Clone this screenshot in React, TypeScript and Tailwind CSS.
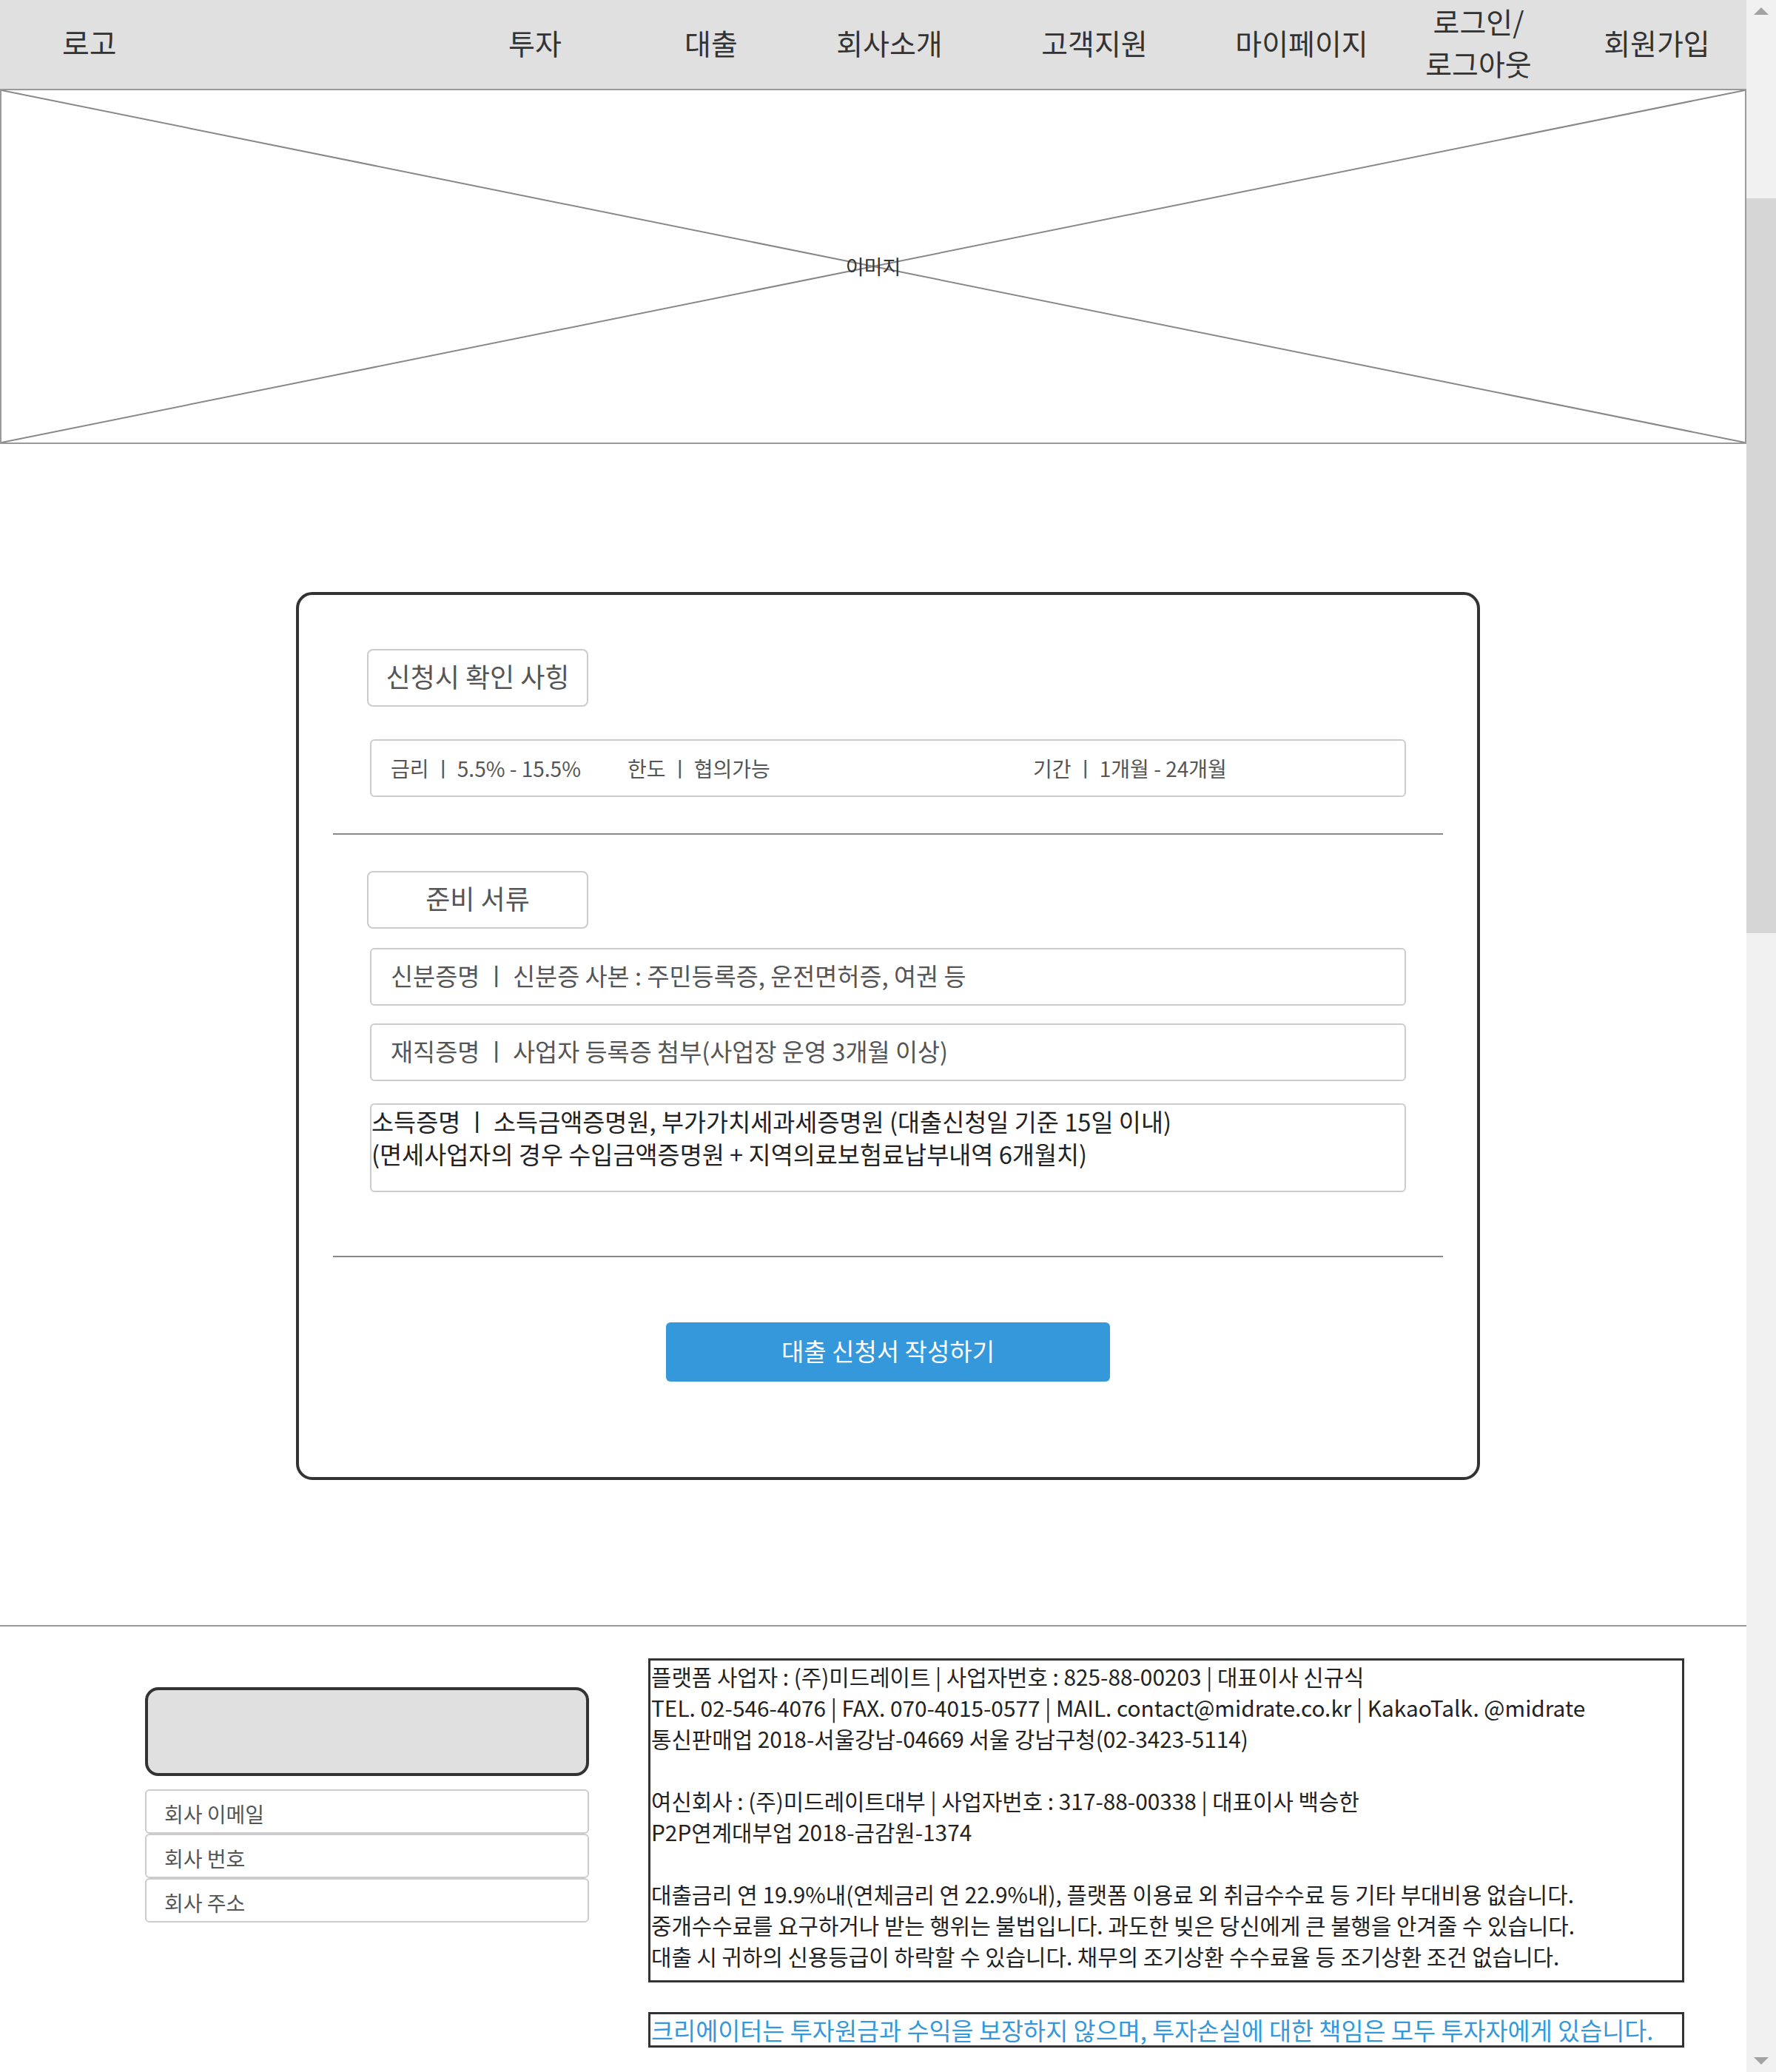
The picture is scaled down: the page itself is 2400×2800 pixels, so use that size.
import React from 'react'

const navItems = [
  { label: '투자', cls: 'ml-[467px]' },
  { label: '대출', cls: 'ml-[38px]' },
  { label: '회사소개', cls: 'ml-[41px]' },
  { label: '고객지원', cls: 'ml-[77px]' },
  { label: '마이페이지', cls: 'ml-[80px]' },
]

const docRows = [
  '신분증명 ㅣ 신분증 사본 : 주민등록증, 운전면허증, 여권 등',
  '재직증명 ㅣ 사업자 등록증 첨부(사업장 운영 3개월 이상)',
]

const footerLines = [
  '플랫폼 사업자 : (주)미드레이트 | 사업자번호 : 825-88-00203 | 대표이사 신규식',
  'TEL. 02-546-4076 | FAX. 070-4015-0577 | MAIL. contact@midrate.co.kr | KakaoTalk. @midrate',
  '통신판매업 2018-서울강남-04669 서울 강남구청(02-3423-5114)',
  '',
  '여신회사 : (주)미드레이트대부 | 사업자번호 : 317-88-00338 | 대표이사 백승한',
  'P2P연계대부업 2018-금감원-1374',
  '',
  '대출금리 연 19.9%내(연체금리 연 22.9%내), 플랫폼 이용료 외 취급수수료 등 기타 부대비용 없습니다.',
  '중개수수료를 요구하거나 받는 행위는 불법입니다. 과도한 빚은 당신에게 큰 불행을 안겨줄 수 있습니다.',
  '대출 시 귀하의 신용등급이 하락할 수 있습니다. 채무의 조기상환 수수료율 등 조기상환 조건 없습니다.',
]

const Header = () => (
  <div className="flex items-center h-[120px] pb-[6px] bg-[#e0e0e0] text-[39px] text-[#333]">
    <div className="ml-[84px] w-[72px] text-[40px] whitespace-nowrap">로고</div>
    {navItems.map((item) => (
      <div key={item.label} className={`${item.cls} w-[200px] text-center whitespace-nowrap`}>
        {item.label}
      </div>
    ))}
    <div className="ml-[39px] w-[200px] text-center leading-[57px]">
      로그인/
      <br />
      로그아웃
    </div>
    <div className="ml-[41px] w-[200px] text-center whitespace-nowrap">회원가입</div>
  </div>
)

const ImagePlaceholder = () => (
  <div className="relative h-[480px] border-2 border-[#999] flex items-center justify-center">
    <svg className="absolute inset-0 w-full h-full" viewBox="0 0 2356 476" preserveAspectRatio="none">
      <line x1="0" y1="0" x2="2356" y2="476" stroke="#888" strokeWidth="2" />
      <line x1="0" y1="476" x2="2356" y2="0" stroke="#888" strokeWidth="2" />
    </svg>
    <span className="relative text-[27px] text-[#333]">이미지</span>
  </div>
)

const SectionTitle = ({ children }: { children: React.ReactNode }) => (
  <div className="ml-[46px] w-[299px] h-[78px] border-2 border-[#ccc] rounded-[8px] pb-[6px] flex items-center justify-center text-[36px] text-[#555] whitespace-nowrap">
    {children}
  </div>
)

const ApplyCard = () => (
  <div className="ml-[400px] mt-[200px] w-[1600px] h-[1200px] border-4 border-[#333] rounded-[22px] px-[46px] pt-[73px] flex flex-col">
    <SectionTitle>신청시 확인 사힝</SectionTitle>

    {/* rate / limit / term */}
    <div className="ml-[50px] mt-[44px] w-[1400px] h-[78px] border-2 border-[#ccc] rounded-[6px] pl-[26px] flex items-center text-[28px] text-[#555]">
      <span className="w-[320px]">금리 ㅣ 5.5% - 15.5%</span>
      <span className="w-[548px]">한도 ㅣ 협의가능</span>
      <span>기간 ㅣ 1개월 - 24개월</span>
    </div>

    <div className="mt-[49px] h-[2px] bg-[#888]" />

    <div className="mt-[49px]">
      <SectionTitle>준비 서류</SectionTitle>
    </div>

    <div className="ml-[50px] mt-[26px] flex flex-col gap-[24px]">
      {docRows.map((row) => (
        <div
          key={row}
          className="w-[1400px] h-[78px] border-2 border-[#ccc] rounded-[6px] pl-[26px] pb-[4px] flex items-center text-[32.7px] text-[#555] whitespace-nowrap"
        >
          {row}
        </div>
      ))}
      <div className="mt-[6px] w-[1400px] h-[120px] border-2 border-[#ccc] rounded-[6px] text-[32.7px] leading-[44px] text-[#222] whitespace-nowrap">
        소득증명 ㅣ 소득금액증명원, 부가가치세과세증명원 (대출신청일 기준 15일 이내)
        <br />
        (면세사업자의 경우 수입금액증명원 + 지역의료보험료납부내역 6개월치)
      </div>
    </div>

    <div className="mt-[86px] h-[2px] bg-[#888]" />

    <button className="self-center mt-[88px] w-[600px] h-[80px] pb-[2px] rounded-[6px] bg-[#3498db] text-white text-[33px]">
      대출 신청서 작성하기
    </button>
  </div>
)

const Footer = () => (
  <div className="mt-[196px] border-t-2 border-[#999] flex pl-[196px] gap-[80px]">
    <div className="mt-[82px] w-[600px] flex flex-col">
      <div className="h-[120px] border-4 border-[#333] rounded-[18px] bg-[#e0e0e0]" />
      <div className="mt-[18px] flex flex-col">
        {['회사 이메일', '회사 번호', '회사 주소'].map((t) => (
          <div
            key={t}
            className="h-[60px] border-2 border-[#ccc] rounded-[6px] pl-[24px] pt-[6px] flex items-center text-[28px] text-[#555]"
          >
            {t}
          </div>
        ))}
      </div>
    </div>

    <div className="mt-[43px] w-[1400px] flex flex-col">
      <div className="border-[3px] border-[#333] pl-[1px] pb-[12px] text-[29.8px] leading-[42px] text-[#222]">
        {footerLines.map((line, i) => (
          <div key={i} className="h-[42px] whitespace-nowrap">
            {line}
          </div>
        ))}
      </div>
      <div className="mt-[40px] h-[48px] border-[3px] border-[#333] pl-[1px] flex items-center text-[32.7px] leading-[42px] text-[#3498db] whitespace-nowrap">
        크리에이터는 투자원금과 수익을 보장하지 않으며, 투자손실에 대한 책임은 모두 투자자에게 있습니다.
      </div>
    </div>
  </div>
)

const Scrollbar = () => (
  <div className="w-[40px] h-[2800px] bg-[#f1f1f1] flex flex-col">
    <div className="h-[40px] flex items-start justify-center pt-[10px]">
      <svg width="20" height="10" viewBox="0 0 20 10">
        <polygon points="10,0 20,10 0,10" fill="#a3a3a3" />
      </svg>
    </div>
    <div className="h-[228px]" />
    <div className="h-[993px] bg-[#d6d6d6]" />
    <div className="flex-1" />
    <div className="h-[40px] flex items-end justify-center pb-[10px]">
      <svg width="20" height="10" viewBox="0 0 20 10">
        <polygon points="0,0 20,0 10,10" fill="#a3a3a3" />
      </svg>
    </div>
  </div>
)

const App = () => {
  return (
    <div className="flex h-[2800px] overflow-hidden bg-white font-['Noto_Sans_CJK_KR','Noto_Sans',sans-serif]">
      <div className="w-[2360px] shrink-0">
        <Header />
        <ImagePlaceholder />
        <ApplyCard />
        <Footer />
      </div>
      <Scrollbar />
    </div>
  )
}

export default App
